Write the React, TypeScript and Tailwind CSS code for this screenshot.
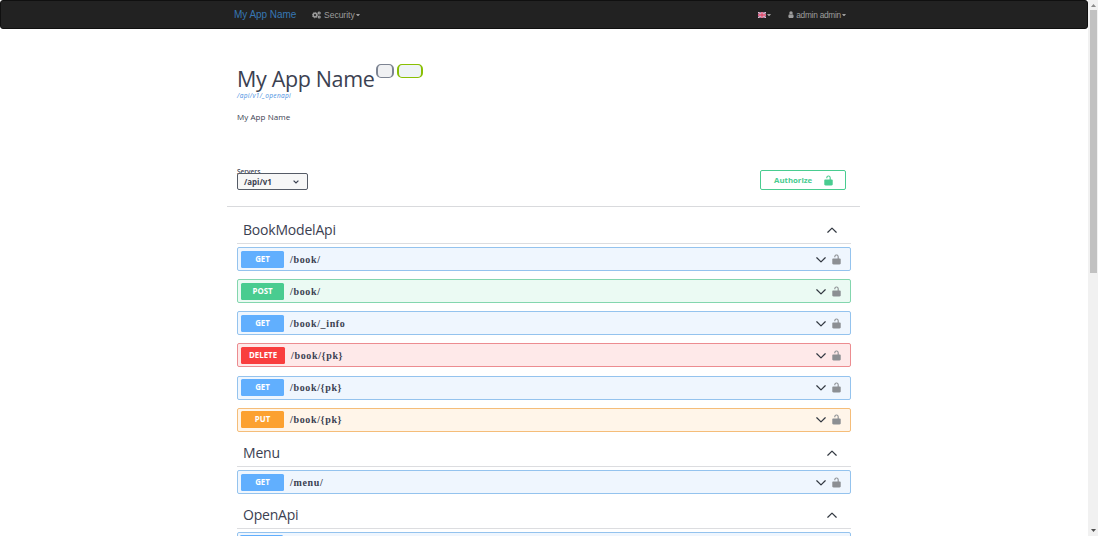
import React from "react";

type Method = "GET" | "POST" | "DELETE" | "PUT";

const rowStyles: Record<Method, string> = {
  GET: "border-[#94c3ee] bg-[#eff6fe]",
  POST: "border-[#83d6ae] bg-[#ebfaf3]",
  DELETE: "border-[#ec8c90] bg-[#fee9e9]",
  PUT: "border-[#f5bd79] bg-[#fff5e9]",
};

const badgeStyles: Record<Method, string> = {
  GET: "bg-[#61affe]",
  POST: "bg-[#49cc90]",
  DELETE: "bg-[#f93e3e]",
  PUT: "bg-[#fca130]",
};

function Lock({ className }: { className: string }) {
  return (
    <svg viewBox="2 0.5 16 19" className={className} fill="currentColor">
      <path d="M15.8 8H14V5.600C14 2.700 12.700 1 10 1 7.200 1 6 2.700 6 5.600V6h2v-.8C8 3.700 8.800 3 10 3c1.200 0 2 .7 2 2.200V8H4c-.600 0-1.500.700-1.500 1.400V17c0 .600.600 1.200 1.200 1.400l1.200.4c.500.1 1.300.2 1.800.2h6.600c.600 0 1.300-.1 1.800-.2l1.200-.4c.600-.2 1.200-.8 1.200-1.400V9.400C17.500 8.700 16.400 8 15.800 8Z" />
    </svg>
  );
}

function Chevron({ className }: { className: string }) {
  return (
    <svg viewBox="0 0 10 6" className={className} fill="none" stroke="currentColor" strokeWidth="1.25" strokeLinecap="round" strokeLinejoin="round">
      <path d="M.8.8 5 4.900 9.200.8" />
    </svg>
  );
}

function Caret() {
  return (
    <svg viewBox="0 0 4 2" className="ml-px h-[2px] w-1" fill="currentColor">
      <path d="M0 0h4L2.500 2h-1Z" />
    </svg>
  );
}

function Cogs() {
  return (
    <svg viewBox="0 0 9 8" className="h-2 w-[9px]" fill="none" stroke="currentColor">
      <circle cx="3" cy="4.100" r="1.800" strokeWidth="1.500" />
      <circle cx="3" cy="4.100" r="2.700" strokeWidth=".9" strokeDasharray="1.100 1.020" />
      <circle cx="7.200" cy="2" r="1" strokeWidth="1.200" />
      <circle cx="7.200" cy="6" r="1" strokeWidth="1.200" />
    </svg>
  );
}

function Person() {
  return (
    <svg viewBox="0 0 6 8" className="mr-[2px] h-[7px] w-[6px]" fill="currentColor">
      <circle cx="3" cy="2.200" r="2" />
      <path d="M1.200 3.700C.3 4 0 5 0 6.300 0 7.400.5 8 1.300 8h3.400C5.500 8 6 7.400 6 6.300 6 5 5.700 4 4.800 3.700 4 4.600 2 4.600 1.200 3.700Z" />
    </svg>
  );
}

function Flag() {
  return (
    <svg viewBox="0 0 8 6" className="h-[6px] w-2" fill="none">
      <path fill="#8b6a92" d="M0 0h8v6H0z" />
      <path stroke="#f3ced8" strokeWidth="1" d="m0 0 8 6M8 0 0 6" />
      <path stroke="#f6cbd8" strokeWidth="2.200" d="M4 0v6M0 3h8" />
      <path stroke="#d8496b" strokeWidth="1.300" d="M4 0v6M0 3h8" />
    </svg>
  );
}

function Operation({ method, path }: { method: Method; path: string }) {
  return (
    <div className={`flex h-6 shrink-0 items-center rounded-[2px] border pl-[3px] pr-[9px] ${rowStyles[method]}`}>
      <span className={`flex h-[17px] items-center justify-center rounded-[1.500px] pt-px font-['Open_Sans',sans-serif] text-[7.900px] font-bold text-white ${method === "DELETE" ? "w-11" : "w-[43px]"} ${badgeStyles[method]}`}>
        {method}
      </span>
      <span className="ml-[6px] grow pt-px font-['Liberation_Serif',serif] text-[10px] font-bold leading-3 tracking-[0.650px] text-[#3b4151]">{path}</span>
      <Chevron className="mr-[6px] mt-px h-[6px] w-[10px] text-[#333942]" />
      <Lock className="h-[11px] w-[9px] text-[#8c8f93]" />
    </div>
  );
}

function Section({ title, ops }: { title: string; ops: { method: Method; path: string }[] }) {
  return (
    <section>
      <div className="flex h-[27px] items-center justify-between border-b border-[#dcdde0] pl-[6px] pr-[14px]">
        <h2 className="font-['Open_Sans',sans-serif] text-[14px] leading-[18px] tracking-[-0.200px] text-[#3b4151]">{title}</h2>
        <Chevron className="h-[6px] w-[10px] rotate-180 text-[#333942]" />
      </div>
      <div className="mt-[3px] flex flex-col gap-[8.150px]">
        {ops.map((op, i) => (
          <Operation key={i} {...op} />
        ))}
      </div>
    </section>
  );
}

const bookOps: { method: Method; path: string }[] = [
  { method: "GET", path: "/book/" },
  { method: "POST", path: "/book/" },
  { method: "GET", path: "/book/_info" },
  { method: "DELETE", path: "/book/{pk}" },
  { method: "GET", path: "/book/{pk}" },
  { method: "PUT", path: "/book/{pk}" },
];

export default function App() {
  return (
    <div className="flex h-[536px] w-[1098px] overflow-hidden bg-white font-['Open_Sans',sans-serif]">
      <div className="flex h-full w-[1088px] flex-col">
        <nav className="flex h-[29px] shrink-0 items-center rounded-[3px] border border-[#101010] bg-[#222] pl-[233px] pr-[241px] font-['Liberation_Sans',sans-serif] text-[8.200px] leading-3 text-[#9d9d9d]">
          <span className="w-[78px] whitespace-nowrap text-[10px] tracking-[-0.050px] text-[#3777b3]">My App Name</span>
          <span className="flex items-center">
            <Cogs />
            <span className="ml-[3px] text-[8.500px]">Security</span>
            <Caret />
          </span>
          <span className="ml-auto flex items-center"><Flag /><Caret /></span>
          <span className="ml-[17px] flex items-center"><Person /><span className="text-[8.300px] tracking-[-0.250px]">admin admin</span><Caret /></span>
        </nav>

        <main className="ml-[227px] flex w-[633px] flex-col">
          <header className="h-[140px] pl-[10px] pt-[34px]">
            <div className="flex items-start">
              <h1 className="w-[139px] whitespace-nowrap pt-px text-[21.500px] leading-[30px] tracking-[-0.350px] text-[#3b4151]">My App Name</h1>
              <span className="mt-px h-[14px] w-[18px] rounded-[5px] border-x-2 border-y border-[#7d8492] bg-[#f0f1f3]" />
              <span className="ml-[3px] mt-px h-[14px] w-[26px] rounded-[5px] border-x-2 border-y border-[#89bf04] bg-[#eef3f6]" />
            </div>
            <p className="-mt-[2px] text-[6.500px] italic leading-2 tracking-[0.350px] text-[#4990e2]">/api/v1/_openapi</p>
            <p className="mt-[11px] text-[8px] leading-[12px] tracking-[0.060px] text-[#3b4151]">My App Name</p>
          </header>

          <div className="flex h-[38px] items-start justify-between border-b border-[#d9dadd] pl-[10px] pr-[14px]">
            <div className="flex flex-col">
              <span className="h-[4px] text-[6.500px] font-semibold leading-[5px] text-[#3b4151]">Servers</span>
              <button className="flex h-[17px] w-[71px] items-center justify-between rounded-[2px] border border-[#555b66] bg-[#f7f7f7] pl-[6px] pr-2 text-[7.900px] font-bold leading-3 text-[#3b4151]">
                /api/v1
                <svg viewBox="0 0 6 4" className="h-1 w-[6px]" fill="none" stroke="currentColor" strokeWidth="1.200"><path d="m.6.6 2.400 2.400L5.400.6" /></svg>
              </button>
            </div>
            <button className="mt-px flex h-5 w-[86px] items-center rounded-[2px] border border-[#49cc90] pl-[13px] text-[7.800px] font-bold text-[#49cc90]">
              <span className="pt-[2px]">Authorize</span>
              <Lock className="ml-auto mr-3 h-[11px] w-[9px]" />
            </button>
          </div>

          <div className="flex flex-col gap-[8.300px] pl-[10px] pr-[9px] pt-[10px]">
            <Section title="BookModelApi" ops={bookOps} />
            <Section title="Menu" ops={[{ method: "GET", path: "/menu/" }]} />
            <Section title="OpenApi" ops={[]} />
          </div>
          <div className="ml-[10px] mr-[9px] h-6 shrink-0 rounded-[2px] border border-[#94c3ee] bg-[#eff6fe] p-[2px]">
            <div className="h-[17px] w-[43px] rounded-[1.500px] bg-[#61affe]" />
          </div>
        </main>
      </div>

      <div className="flex h-full w-[10px] flex-col items-center bg-[#f1f1f1]">
        <svg viewBox="0 0 5 3" className="mt-1 h-[3px] w-[5px]" fill="#8a8a8a"><path d="M0 3h5L2.500 0Z" /></svg>
        <div className="mt-[3px] h-[263px] w-[7px] bg-[#c1c1c1]" />
        <svg viewBox="0 0 5 3" className="mb-1 mt-auto h-[3px] w-[5px]" fill="#505050"><path d="M0 0h5L2.500 3Z" /></svg>
      </div>
    </div>
  );
}
